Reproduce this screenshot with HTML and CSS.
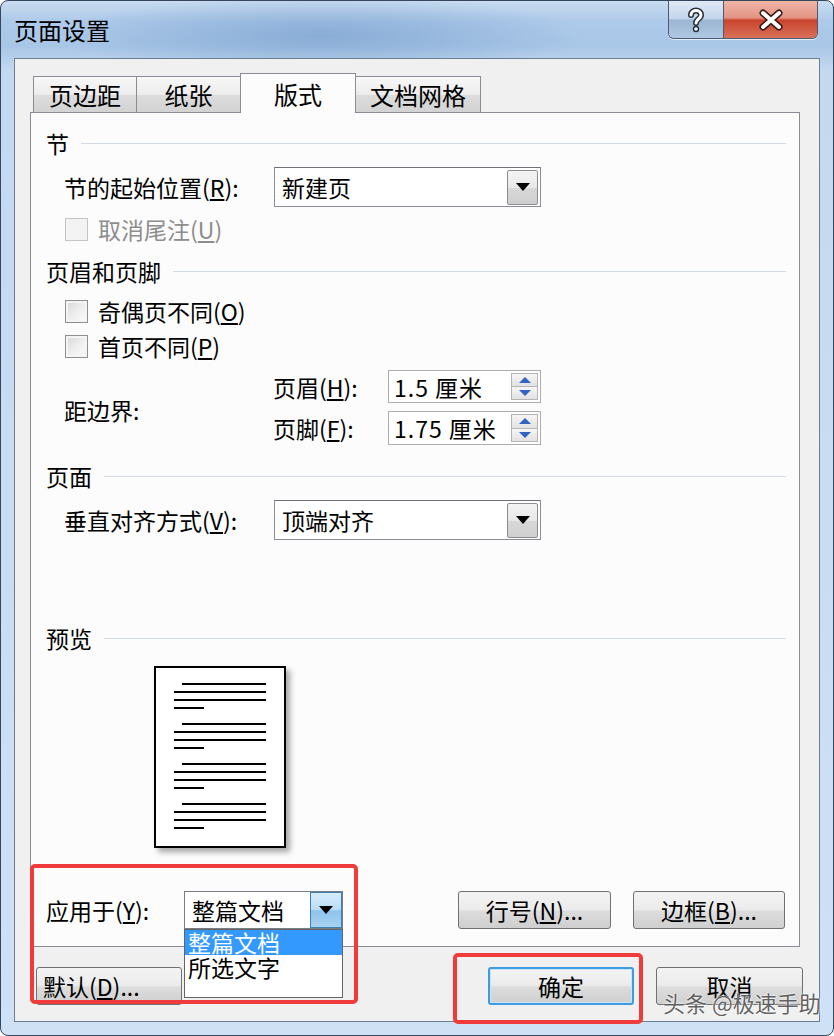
FILE: index.html
```html
<!DOCTYPE html>
<html lang="zh-CN">
<head>
    <meta charset="UTF-8">
    <title>页面设置</title>
    <link rel="stylesheet" href="styles.css">
</head>
<body>
    <div class="window">
        <div class="titlebar">
            <span class="title">页面设置</span>
            <div class="caption-buttons">
                <div class="cap-help">
                    <svg width="24" height="26" viewBox="-12 -13 24 26">
                        <path d="M-5 -5 C-5 -11 5 -11 5 -5 C5 -1 0 -1 0 3" fill="none" stroke="#26303c" stroke-width="6" stroke-linecap="round"/>
                        <circle cx="0" cy="9" r="3.2" fill="#26303c"/>
                        <path d="M-5 -5 C-5 -11 5 -11 5 -5 C5 -1 0 -1 0 3" fill="none" stroke="#fff" stroke-width="3" stroke-linecap="round"/>
                        <circle cx="0" cy="9" r="1.8" fill="#fff"/>
                    </svg>
                </div>
                <div class="cap-close">
                    <svg width="26" height="22" viewBox="-13 -11 26 22">
                        <path d="M-8 -7 L8 7 M8 -7 L-8 7" stroke="#3a1a14" stroke-width="7" stroke-linecap="round"/>
                        <path d="M-8 -7 L8 7 M8 -7 L-8 7" stroke="#fff" stroke-width="4" stroke-linecap="round"/>
                    </svg>
                </div>
            </div>
        </div>

        <div class="client">
            <div class="tabs">
                <div class="tab tab-w1">页边距</div>
                <div class="tab tab-w2">纸张</div>
                <div class="tab tab-w3 tab-active">版式</div>
                <div class="tab tab-w4">文档网格</div>
            </div>

            <div class="panel">
                <div class="group-title gt-section">节</div>
                <div class="field-row fr-start">
                    <span class="field-label">节的起始位置(<u>R</u>):</span>
                    <div class="select">
                        <span class="select-value">新建页</span>
                        <span class="select-arrow"><i class="tri-down"></i></span>
                    </div>
                </div>
                <div class="check-row cr-endnote disabled">
                    <span class="checkbox"></span>取消尾注(<u>U</u>)
                </div>

                <div class="group-title gt-header">页眉和页脚</div>
                <div class="check-row cr-odd">
                    <span class="checkbox"></span>奇偶页不同(<u>O</u>)
                </div>
                <div class="check-row cr-first">
                    <span class="checkbox"></span>首页不同(<u>P</u>)
                </div>
                <div class="margins">
                    <span class="margins-label">距边界:</span>
                    <div class="spin-list">
                        <div class="spin-row">
                            <span class="spin-label">页眉(<u>H</u>):</span>
                            <div class="spin spin-top">
                                <span class="spin-value">1.5 厘米</span>
                                <span class="spin-buttons"><b><i class="tri-up"></i></b><b><i class="tri-dn"></i></b></span>
                            </div>
                        </div>
                        <div class="spin-row">
                            <span class="spin-label">页脚(<u>F</u>):</span>
                            <div class="spin spin-bottom">
                                <span class="spin-value">1.75 厘米</span>
                                <span class="spin-buttons"><b><i class="tri-up"></i></b><b><i class="tri-dn"></i></b></span>
                            </div>
                        </div>
                    </div>
                </div>

                <div class="group-title gt-page">页面</div>
                <div class="field-row fr-valign">
                    <span class="field-label">垂直对齐方式(<u>V</u>):</span>
                    <div class="select">
                        <span class="select-value">顶端对齐</span>
                        <span class="select-arrow"><i class="tri-down"></i></span>
                    </div>
                </div>

                <div class="group-title gt-preview">预览</div>
                <div class="page">
                    <div class="para"><span class="first"></span><span></span><span></span><span class="last"></span></div>
                    <div class="para"><span class="first"></span><span></span><span></span><span class="last"></span></div>
                    <div class="para"><span class="first"></span><span></span><span></span><span class="last"></span></div>
                    <div class="para"><span class="first"></span><span></span><span></span><span class="last"></span></div>
                </div>

                <div class="apply-row">
                    <span class="apply-label">应用于(<u>Y</u>):</span>
                    <div class="combo">
                        <span class="select-value">整篇文档</span>
                        <span class="combo-arrow"><i class="tri-down"></i></span>
                        <div class="combo-list">
                            <div class="combo-item selected">整篇文档</div>
                            <div class="combo-item">所选文字</div>
                        </div>
                    </div>
                    <button class="btn btn-lines">行号(<u>N</u>)...</button>
                    <button class="btn btn-borders">边框(<u>B</u>)...</button>
                </div>
            </div>

            <div class="dialog-buttons">
                <button class="btn btn-default">默认(<u>D</u>)...</button>
                <button class="btn btn-ok">确定</button>
                <button class="btn btn-cancel">取消</button>
            </div>
        </div>

        <div class="mark mark-apply"></div>
        <div class="mark mark-ok"></div>
        <div class="watermark">头条 @极速手助</div>
    </div>
</body>
</html>
```

FILE: styles.css
```css
* {
    box-sizing: border-box;
}
body {
    margin: 0;
    font-family: "Noto Sans CJK SC", "Noto Sans", sans-serif;
    font-size: 23px;
    line-height: 26px;
    color: #000;
    background: #fff;
}
u {
    text-decoration: underline;
    text-underline-offset: 2px;
}
.window {
    position: relative;
    width: 834px;
    height: 1036px;
    border: 1px solid #34475c;
    border-radius: 8px;
    padding: 0 13px 13px;
    overflow: hidden;
    background:
        radial-gradient(ellipse 260px 40px at 320px 34px, rgba(110, 150, 200, 0.55), rgba(110, 150, 200, 0) 100%),
        linear-gradient(180deg, #c9dcf0 0, #aecaea 20px, #a8c6e6 45px, #c3d9f0 70px, #cfe1f4 100%);
}
.titlebar {
    display: flex;
    align-items: center;
    height: 57px;
}
.title {
    font-size: 24px;
    line-height: 28px;
}
.caption-buttons {
    display: flex;
    align-self: flex-start;
    margin-left: auto;
    margin-right: 2px;
    height: 38px;
    border: 1px solid #4b5b70;
    border-top: none;
    border-radius: 0 0 6px 6px;
    overflow: hidden;
    box-shadow: 0 1px 0 rgba(255, 255, 255, 0.7);
}
.cap-help,
.cap-close {
    display: flex;
    align-items: center;
    justify-content: center;
}
.cap-help {
    width: 55px;
    border-right: 1px solid #4b5b70;
    background: linear-gradient(180deg, #dfe9f5 0, #c3d5ea 48%, #9bb6d3 52%, #b0c8e2 100%);
}
.cap-close {
    width: 93px;
    background: linear-gradient(180deg, #f0b5a7 0, #e39583 45%, #c9432c 52%, #d9715a 100%);
}
.client {
    height: 964px;
    border: 1px solid #6c7d91;
    background: #f0f0f0;
    padding: 14px 0 0 15px;
}

/* tabs */
.tabs {
    display: flex;
    align-items: flex-end;
    height: 40px;
    margin-left: 3px;
    margin-bottom: -1px;
}
.tab {
    height: 36px;
    margin-bottom: 1px;
    border: 1px solid #898c95;
    border-bottom: none;
    background: linear-gradient(180deg, #f8f8f8 0, #ececec 50%, #dcdcdc 52%, #d3d3d3 100%);
    text-align: center;
    font-size: 24px;
    line-height: 36px;
}
.tab + .tab {
    margin-left: -1px;
}
.tab-w1 { width: 104px; }
.tab-w2 { width: 105px; }
.tab-w3 { width: 116px; }
.tab-w4 { width: 126px; }
.tab-active {
    position: relative;
    z-index: 1;
    height: 40px;
    margin-bottom: 0;
    background: #fcfcfd;
    line-height: 40px;
}

.panel {
    width: 770px;
    height: 835px;
    border: 1px solid #898c95;
    background: #fcfcfd;
    padding: 0 13px 0 15px;
}
.group-title {
    display: flex;
    align-items: center;
    height: 26px;
}
.group-title::after {
    content: "";
    flex: 1;
    height: 1px;
    margin-left: 12px;
    background: #d3dae4;
}
.gt-section { margin-top: 17px; }
.gt-header { margin-top: 16px; }
.gt-page { margin-top: 18px; }
.gt-preview { margin-top: 85px; }

/* dropdown rows */
.field-row {
    display: flex;
    align-items: center;
    height: 40px;
    padding-left: 18px;
}
.fr-start { margin-top: 11px; }
.fr-valign { margin-top: 11px; }
.field-label {
    width: 210px;
}
.select {
    display: flex;
    align-items: center;
    width: 267px;
    height: 40px;
    border: 1px solid #8a8d94;
    border-top-color: #6f7278;
    background: #fff;
}
.select-value {
    padding-left: 7px;
}
.select-arrow {
    display: flex;
    align-items: center;
    justify-content: center;
    width: 31px;
    height: 35px;
    margin-left: auto;
    margin-right: 2px;
    border: 1px solid #8c8c8c;
    border-radius: 2px;
    background: linear-gradient(180deg, #f4f4f4 0, #e8e8e8 50%, #d8d8d8 52%, #cfcfcf 100%);
}
.tri-down {
    width: 0;
    height: 0;
    border-left: 7px solid transparent;
    border-right: 7px solid transparent;
    border-top: 8px solid #000;
}

/* checkboxes */
.check-row {
    display: flex;
    align-items: center;
    height: 26px;
    padding-left: 19px;
}
.cr-endnote { margin-top: 9px; }
.cr-odd { margin-top: 14px; }
.cr-first { margin-top: 9px; }
.checkbox {
    width: 23px;
    height: 23px;
    margin-right: 10px;
    border: 1px solid #8e8f8f;
    background: linear-gradient(135deg, #d6d6d6 0, #eeeeee 50%, #fbfbfb 100%);
    box-shadow: inset 0 0 0 2px #f4f4f4;
}
.disabled {
    color: #8d8d8d;
}
.disabled .checkbox {
    border-color: #c4c4c4;
    background: #f3f3f3;
    box-shadow: none;
}

/* margins */
.margins {
    display: flex;
    align-items: center;
    height: 75px;
    margin-top: 11px;
    padding-left: 18px;
}
.margins-label {
    width: 209px;
    padding-top: 5px;
}
.spin-list {
    display: flex;
    flex-direction: column;
    gap: 8px;
}
.spin-row {
    display: flex;
    align-items: center;
}
.spin-label {
    width: 115px;
}
.spin {
    display: flex;
    align-items: center;
    width: 153px;
    border: 1px solid #abadb3;
    background: #fff;
}
.spin-top { height: 33px; }
.spin-bottom { height: 34px; }
.spin-value {
    padding-left: 5px;
    white-space: pre;
    letter-spacing: 1px;
}
.spin-buttons {
    display: flex;
    flex-direction: column;
    width: 27px;
    height: calc(100% - 4px);
    margin-left: auto;
    margin-right: 2px;
}
.spin-buttons b {
    flex: 1;
    display: flex;
    align-items: center;
    justify-content: center;
    border: 1px solid #b5b5b5;
    background: linear-gradient(180deg, #f6f6f6 0, #e2e2e2 100%);
}
.spin-buttons b + b {
    border-top: none;
}
.tri-up,
.tri-dn {
    width: 0;
    height: 0;
    border-left: 6px solid transparent;
    border-right: 6px solid transparent;
}
.tri-up { border-bottom: 6px solid #2f64c4; }
.tri-dn { border-top: 6px solid #2f64c4; }

/* preview */
.page {
    width: 132px;
    height: 182px;
    margin: 15px 0 0 108px;
    padding: 15px 18px 0;
    border: 2px solid #000;
    background: #fff;
    box-shadow: 4px 4px 6px rgba(0, 0, 0, 0.35);
}
.para {
    margin-bottom: 14px;
}
.para span {
    display: block;
    height: 2px;
    margin-bottom: 6px;
    background: #000;
}
.para .first {
    margin-left: 8px;
}
.para .last {
    width: 30px;
}

/* apply to */
.apply-row {
    display: flex;
    align-items: center;
    height: 38px;
    margin-top: 43px;
}
.apply-label {
    width: 138px;
}
.combo {
    position: relative;
    display: flex;
    align-items: center;
    width: 159px;
    height: 38px;
    border: 1px solid #7a7d84;
    background: #fff;
}
.combo-arrow {
    display: flex;
    align-items: center;
    justify-content: center;
    width: 32px;
    height: 36px;
    margin-left: auto;
    border: 1px solid #3c7fb1;
    background: linear-gradient(180deg, #d7ecfb 0, #b8dcf6 50%, #8cc3ec 52%, #a9d3f2 100%);
}
.combo-list {
    position: absolute;
    top: 37px;
    left: -1px;
    z-index: 5;
    width: 159px;
    height: 69px;
    border: 1px solid #646464;
    background: #fff;
}
.combo-item {
    height: 25px;
    padding-left: 3px;
    line-height: 25px;
}
.combo-item.selected {
    background: #3399ff;
    color: #fff;
}

/* buttons */
.btn {
    height: 38px;
    padding: 0;
    border: 1px solid #707070;
    border-radius: 3px;
    background: linear-gradient(180deg, #f3f3f3 0, #ebebeb 50%, #dddddd 52%, #cfcfcf 100%);
    font-family: inherit;
    font-size: 23px;
    line-height: 26px;
    color: #000;
}
.btn-lines {
    width: 153px;
    margin-left: auto;
}
.btn-borders {
    width: 152px;
    margin-left: 22px;
    margin-right: 1px;
}
.dialog-buttons {
    display: flex;
    width: 773px;
    margin-top: 20px;
}
.btn-default {
    width: 146px;
    margin-left: 6px;
    text-align: left;
    padding-left: 6px;
}
.btn-ok {
    width: 146px;
    margin-left: auto;
    border: 2px solid #3c9be2;
    box-shadow: inset 0 0 0 1px #c7e6fa;
}
.btn-cancel {
    width: 147px;
    margin-left: 22px;
}

/* annotations */
.mark {
    position: absolute;
    border: 4px solid #ef3b3b;
    border-radius: 5px;
}
.mark-apply {
    left: 29px;
    top: 863px;
    width: 328px;
    height: 140px;
}
.mark-ok {
    left: 452px;
    top: 952px;
    width: 190px;
    height: 71px;
}
.watermark {
    position: absolute;
    left: 662px;
    top: 986px;
    font-size: 22px;
    line-height: 30px;
    color: rgba(55, 55, 55, 0.8);
    text-shadow: 0 0 2px #fff, 0 0 2px #fff;
}
```
